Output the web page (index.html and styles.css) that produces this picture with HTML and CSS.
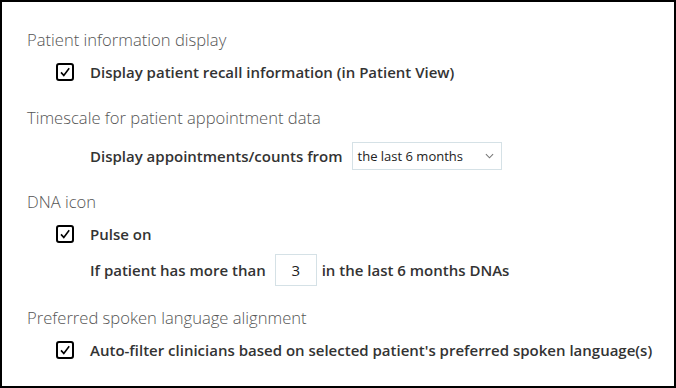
FILE: index.html
```html
<!DOCTYPE html>
<html lang="en">
<head>
    <meta charset="UTF-8">
    <title>Patient settings</title>
    <link rel="stylesheet" href="styles.css">
</head>
<body>
    <div class="panel">

        <!-- Patient information display -->
        <div class="section">
            <h2 class="heading">Patient information display</h2>
            <label class="row">
                <span class="check"><svg viewBox="0 0 12 12" width="12" height="12"><path d="M2 6.4 L4.8 9.4 L10.2 2.2" /></svg></span>
                <span class="label">Display patient recall information (in Patient View)</span>
            </label>
        </div>

        <!-- Timescale -->
        <div class="section section-select">
            <h2 class="heading">Timescale for patient appointment data</h2>
            <div class="row row-plain">
                <span class="label">Display appointments/counts from</span>
                <div class="select">
                    <span>the last 6 months</span>
                    <svg viewBox="0 0 10 6" width="9" height="6"><path d="M1 1 L5 5 L9 1" /></svg>
                </div>
            </div>
        </div>

        <!-- DNA icon -->
        <div class="section">
            <h2 class="heading">DNA icon</h2>
            <label class="row">
                <span class="check"><svg viewBox="0 0 12 12" width="12" height="12"><path d="M2 6.4 L4.8 9.4 L10.2 2.2" /></svg></span>
                <span class="label">Pulse on</span>
            </label>
            <div class="row row-plain row-input">
                <span class="label">If patient has more than</span>
                <div class="number">3</div>
                <span class="label">in the last 6 months DNAs</span>
            </div>
        </div>

        <!-- Preferred spoken language -->
        <div class="section">
            <h2 class="heading">Preferred spoken language alignment</h2>
            <label class="row">
                <span class="check"><svg viewBox="0 0 12 12" width="12" height="12"><path d="M2 6.4 L4.8 9.4 L10.2 2.2" /></svg></span>
                <span class="label">Auto-filter clinicians based on selected patient's preferred spoken language(s)</span>
            </label>
        </div>

    </div>
</body>
</html>
```

FILE: styles.css
```css
body {
    margin: 0;
    background-color: white;
    font-family: "Open Sans", sans-serif;
}
.panel {
    box-sizing: border-box;
    width: 676px;
    height: 388px;
    border: 2px solid #000;
    padding: 26px 0 0 25px;
    display: flex;
    flex-direction: column;
    gap: 20px;
    overflow: hidden;
}
.section {
    display: flex;
    flex-direction: column;
    gap: 6px;
}
.section-select {
    gap: 12px;
}
.heading {
    margin: 0;
    font-size: 16.6px;
    font-weight: 300;
    line-height: 24px;
    color: #555;
}
.row {
    display: flex;
    align-items: center;
    height: 28px;
    padding-left: 29px;
    gap: 16px;
}
.row-plain {
    padding-left: 63px;
    gap: 9px;
}
.row-input {
    height: 32px;
    gap: 0;
}
.label {
    font-size: 15px;
    font-weight: 600;
    color: #333;
    white-space: nowrap;
}
.check {
    box-sizing: border-box;
    flex-shrink: 0;
    width: 18px;
    height: 18px;
    border: 2px solid #000;
    border-radius: 3px;
    display: flex;
    align-items: center;
    justify-content: center;
}
.check svg path {
    fill: none;
    stroke: #000;
    stroke-width: 1.6;
}
.select {
    box-sizing: border-box;
    width: 150px;
    height: 28px;
    border: 1px solid #d5e1e6;
    padding: 0 7px 0 5px;
    display: flex;
    align-items: center;
    justify-content: space-between;
    font-size: 13px;
    color: #222;
}
.select svg path {
    fill: none;
    stroke: #777;
    stroke-width: 1.2;
}
.number {
    box-sizing: border-box;
    width: 42px;
    height: 32px;
    margin: 0 5px 0 9px;
    border: 1px solid #d5e1e6;
    display: flex;
    align-items: center;
    justify-content: center;
    font-size: 15px;
    color: #222;
}
```
